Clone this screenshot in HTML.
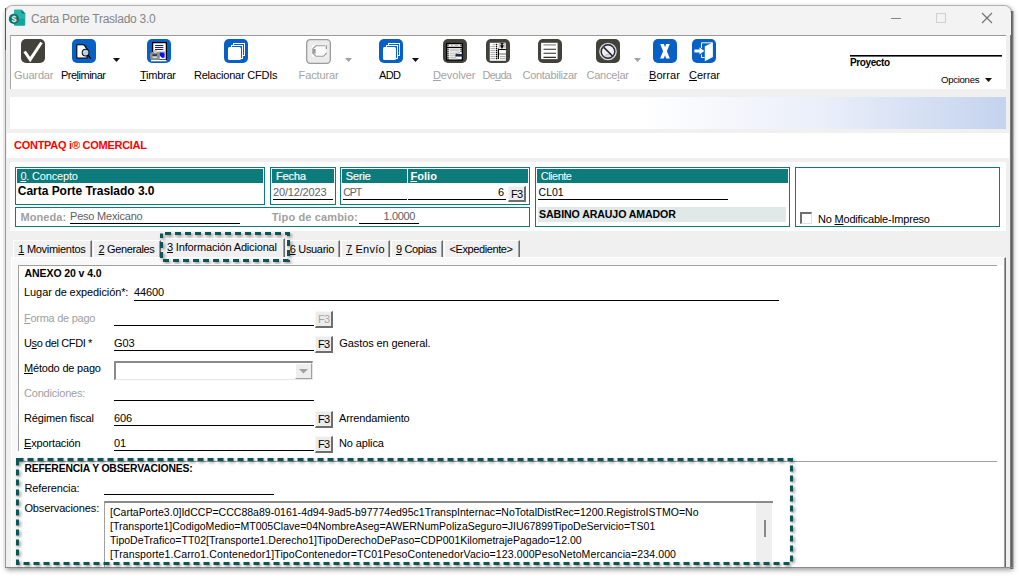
<!DOCTYPE html><html><head><meta charset="utf-8"><style>
*{margin:0;padding:0;box-sizing:border-box}
html,body{width:1020px;height:576px;overflow:hidden;background:#fff;font-family:"Liberation Sans", sans-serif}
.a{position:absolute}
.t{white-space:pre}
u{text-decoration:underline;text-underline-offset:1px}
</style></head><body><div class="a" style="left:5px;top:5px;width:1007px;height:563px;border-radius:8px 8px 0 0;box-shadow:1px 2px 5px rgba(0,0,0,.4);background:#f0f0f0;border:1px solid #b0b0b0;border-left:1px solid #9a9a9a"></div>
<div class="a" style="left:5px;top:8px;width:1px;height:42px;background:#555"></div>
<div class="a" style="left:1010px;top:11px;width:4px;height:558px;background:linear-gradient(to right,#8c8c8c,#5e5e5e 35%,#7a7a7a 65%,#d0d0d0)"></div>
<div class="a" style="left:5px;top:567px;width:1008px;height:1px;background:#8a8a8a"></div>
<div class="a" style="left:6px;top:6px;width:1005px;height:29px;background:#f3f3f3;border-radius:7px 7px 0 0"></div>
<svg class="a" style="left:6px;top:6px" width="24" height="24" viewBox="0 0 24 24">
<path d="M9 3.8 H15.5 L19.2 7.5 V18.8 Q19.2 19.8 18.2 19.8 H9 Q8 19.8 8 18.8 V4.8 Q8 3.8 9 3.8 Z" fill="#14a49b"/>
<path d="M8 3.8 H15.5 L19.2 7.5 V12.5 H8 Z" fill="#2bb3a9"/>
<path d="M15.5 3.8 L19.2 7.5 H15.5 Z" fill="#0d7a73"/>
<circle cx="7.9" cy="12.9" r="5.1" fill="#0b736e"/>
<text x="7.9" y="16.2" font-size="9" font-weight="bold" fill="#e8f4f3" text-anchor="middle" font-family="Liberation Sans">$</text>
</svg>
<div class="a t" style="left:31px;top:12.84px;font-size:12px;line-height:12px;color:#858585;font-weight:normal;;letter-spacing:-0.262px">Carta Porte Traslado 3.0</div>
<div class="a" style="left:891px;top:18px;width:10px;height:1px;background:#888"></div>
<div class="a" style="left:936px;top:13px;width:10px;height:10px;border:1px solid #cfcfcf"></div>
<svg class="a" style="left:981px;top:12px" width="12" height="12" viewBox="0 0 12 12"><path d="M1 1 L11 11 M11 1 L1 11" stroke="#707070" stroke-width="1.1"/></svg>
<div class="a" style="left:10px;top:35px;width:996px;height:54px;background:#fff;border-top:1px solid #9a9a9a;border-left:1px solid #a8a8a8"></div>
<svg class="a" style="left:21px;top:39px" width="24" height="24" viewBox="0 0 24 24"><rect x="0" y="0" width="24" height="24" rx="5" fill="#42423a"/><path d="M3.6 12.5 L9.2 20.5 L20.5 3.5" fill="none" stroke="#fff" stroke-width="3" stroke-linejoin="miter"/></svg>
<svg class="a" style="left:72px;top:39px" width="24" height="24" viewBox="0 0 24 24"><rect x="0" y="0" width="24" height="24" rx="5" fill="#0760c6"/><path d="M4.8 5.8 H11.8 L13 7.2 H13.8 V8.8 L15 9.6 V19 H4.8 Z" fill="#fff" stroke="#000" stroke-width="1.1"/><circle cx="13.6" cy="13.6" r="3.4" fill="#b8d2f0" stroke="#111" stroke-width="1.1"/><path d="M16 16.3 L19 19.8" stroke="#000" stroke-width="1.4"/></svg>
<svg class="a" style="left:147px;top:39px" width="24" height="24" viewBox="0 0 24 24"><rect x="0" y="0" width="24" height="24" rx="5" fill="#0760c6"/><rect x="5.6" y="3.6" width="13.8" height="17.4" fill="#fff" stroke="#000" stroke-width="1.3"/><path d="M8 6.5 H16.3 M8 8.5 H16.3 M8 10.5 H16.3" stroke="#1414f0" stroke-width="1"/><rect x="11" y="12.5" width="7.5" height="2" fill="#9aa0b0"/><path d="M11.5 15.5 L13.5 13.5 L16.5 13.8 L17.8 15 L17.5 18.5 L15.5 19 L13 17 Z" fill="#0a14e6"/><path d="M3 16 Q3 12.5 8 12.5 Q13 12.5 13 16.5 L12.5 21.5 H4 Q3 20 3 16 Z" fill="#8e8e8e"/><rect x="7" y="11" width="3" height="3" fill="#c8c8c8"/><rect x="5.5" y="15.5" width="4.5" height="1.2" fill="#111"/><rect x="5.5" y="17.5" width="4.5" height="1.5" fill="#d8d8d8"/><rect x="4" y="21" width="15.5" height="1.3" fill="#fff"/></svg>
<svg class="a" style="left:224px;top:39px" width="24" height="24" viewBox="0 0 24 24"><rect x="0" y="0" width="24" height="24" rx="5" fill="#0760c6"/><rect x="9.5" y="4.5" width="11" height="12" fill="none" stroke="#fff" stroke-width="1"/><rect x="7.5" y="6.5" width="11" height="13" fill="#0760c6" stroke="#fff" stroke-width="1"/><rect x="4" y="8" width="13" height="13" rx="1.5" fill="#fff"/></svg>
<svg class="a" style="left:306px;top:39px" width="25" height="25" viewBox="0 0 25 25"><rect x="0.65" y="0.65" width="23.7" height="23.7" rx="3.5" fill="#ebebeb" stroke="#9c9c9c" stroke-width="1.3"/><rect x="5.8" y="5.8" width="14.3" height="12" fill="#fbfbfb"/><path d="M20.3 6.3 V10" stroke="#8c8c8c" stroke-width="1.2"/><path d="M19 6.8 H10 L7 9.5 V14.5 L10 17.3 H17.5 L20.6 14" fill="none" stroke="#9a9a9a" stroke-width="1.1"/><rect x="6.5" y="10" width="3.2" height="4.5" fill="#9c9c9c"/><rect x="7.2" y="14.8" width="2.5" height="1" fill="#bbb"/></svg>
<svg class="a" style="left:379px;top:39px" width="24" height="24" viewBox="0 0 24 24"><rect x="0" y="0" width="24" height="24" rx="5" fill="#0760c6"/><rect x="9.5" y="4.5" width="11" height="12" fill="none" stroke="#fff" stroke-width="1"/><rect x="7.5" y="6.5" width="11" height="13" fill="#0760c6" stroke="#fff" stroke-width="1"/><rect x="4" y="8" width="13" height="13" rx="1.5" fill="#fff"/></svg>
<svg class="a" style="left:443px;top:39px" width="24" height="24" viewBox="0 0 24 24"><rect x="0" y="0" width="24" height="24" rx="5" fill="#42423a"/><rect x="3.6" y="4.6" width="15.8" height="16.4" fill="#fff" stroke="#000" stroke-width="1.3"/><path d="M3.6 8.4 H19.4" stroke="#000" stroke-width="1.3"/><circle cx="5" cy="6.3" r="0.75" fill="#000"/><circle cx="18" cy="6.3" r="0.75" fill="#000"/><circle cx="5" cy="10.2" r="0.75" fill="#000"/><circle cx="18" cy="10.2" r="0.75" fill="#000"/><circle cx="5" cy="12.2" r="0.75" fill="#000"/><circle cx="18" cy="12.2" r="0.75" fill="#000"/><circle cx="5" cy="14.2" r="0.75" fill="#000"/><circle cx="5" cy="16.2" r="0.75" fill="#000"/><circle cx="5" cy="18.2" r="0.75" fill="#000"/><circle cx="5" cy="20" r="0.75" fill="#000"/><path d="M8 6.3 H10 M11.5 6.3 H15.5" stroke="#999" stroke-width="0.8"/><rect x="6.5" y="9.5" width="10" height="3" fill="#cdcdcd"/><path d="M6.5 14.2 H14 M6.5 16.2 H13 M6.5 18.2 H13 M6.5 20 H15" stroke="#a8a8a8" stroke-width="0.9"/><path d="M12.5 15 H20.5 V17.6 H12.5 Z" fill="#22264e"/><path d="M13 14.8 L15 13.8 H17" stroke="#555" stroke-width="0.6" fill="none"/></svg>
<svg class="a" style="left:486px;top:39px" width="24" height="24" viewBox="0 0 24 24"><rect x="0" y="0" width="24" height="24" rx="5" fill="#42423a"/><rect x="3.8" y="3.8" width="16.1" height="18" fill="#fff"/><rect x="12.5" y="3.8" width="7.4" height="5" fill="#c4c4c4"/><path d="M12.4 9.5 V20" stroke="#000" stroke-width="1.2"/><path d="M12.4 10.5 H19.9" stroke="#000" stroke-width="1.1"/><path d="M16 4 V9.5" stroke="#000" stroke-width="1.3"/><path d="M13.8 6.5 H18.2 L16 9 Z" fill="#000"/><path d="M14.5 4.3 H17.5" stroke="#000" stroke-width="0.8"/><path d="M13 15 H19.9" stroke="#666" stroke-width="1"/><path d="M6.5 5.6 H9 M4.5 7.6 H9 M4.5 9.6 H9 M4.5 11.6 H9 M4.5 13.6 H9 M4.5 15.6 H9 M4.5 17.6 H9 M4.5 19.6 H9 M14 17.6 H19.5 M14 19.6 H19.5" stroke="#a0a0a0" stroke-width="0.9"/><circle cx="10.5" cy="5.6" r="0.8" fill="#000"/><circle cx="10.5" cy="7.6" r="0.8" fill="#000"/><circle cx="10.5" cy="9.6" r="0.8" fill="#000"/><circle cx="10.5" cy="11.6" r="0.8" fill="#000"/><circle cx="10.5" cy="13.6" r="0.8" fill="#000"/><circle cx="10.5" cy="15.6" r="0.8" fill="#000"/><circle cx="10.5" cy="17.6" r="0.8" fill="#000"/><circle cx="10.5" cy="19.6" r="0.8" fill="#000"/></svg>
<svg class="a" style="left:538px;top:39px" width="24" height="24" viewBox="0 0 24 24"><rect x="0" y="0" width="24" height="24" rx="5" fill="#42423a"/><rect x="3.1" y="3.8" width="16.5" height="16.3" fill="#fff"/><path d="M5.5 5.9 H18" stroke="#a0a0a0" stroke-width="1.5"/><path d="M5.5 10.2 H18 M5.5 14.3 H18 M5.5 18.4 H18" stroke="#2a2a2a" stroke-width="1.1"/></svg>
<svg class="a" style="left:596px;top:39px" width="24" height="24" viewBox="0 0 24 24"><rect x="0" y="0" width="24" height="24" rx="5" fill="#42423a"/><circle cx="12" cy="12.5" r="8.2" fill="none" stroke="#dcdcdc" stroke-width="1.3"/><circle cx="12" cy="12.5" r="6.6" fill="#f2f2f2" stroke="#23264a" stroke-width="1.1"/><path d="M9.5 15.5 H13.5 M8.5 17 H15" stroke="#c0c0c0" stroke-width="1.2"/><path d="M7.8 8.3 L16.5 17" stroke="#2a2a2a" stroke-width="1.7"/></svg>
<svg class="a" style="left:653px;top:39px" width="24" height="24" viewBox="0 0 24 24"><rect x="0" y="0" width="24" height="24" rx="5" fill="#0760c6"/><path d="M7.2 5 H10.9 L12 8.3 L13.1 5 H16.8 L13.9 12.3 L16.9 19.6 H13.2 L12 16.2 L10.8 19.6 H7.1 L10.1 12.3 Z" fill="#fff"/></svg>
<svg class="a" style="left:692px;top:39px" width="24" height="24" viewBox="0 0 24 24"><rect x="0" y="0" width="24" height="24" rx="5" fill="#0760c6"/><path d="M9.5 9 V3.8 H20.5 M9.5 15.5 V18.5 H12.5" fill="none" stroke="#fff" stroke-width="1"/><path d="M12.8 7.2 L20.9 3.6 V18 L12.8 22.3 Z" fill="#fff"/><path d="M2.4 10.5 H7.5 V8.3 L12.3 12 L7.5 15.4 V13.5 H2.4 Z" fill="#fff"/></svg>
<svg class="a" style="left:113px;top:58px" width="7" height="5" viewBox="0 0 7 5"><path d="M0 0 H7 L3.5 4 Z" fill="#111"/></svg>
<svg class="a" style="left:345px;top:58px" width="7" height="5" viewBox="0 0 7 5"><path d="M0 0 H7 L3.5 4 Z" fill="#a0a0a0"/></svg>
<svg class="a" style="left:412px;top:58px" width="7" height="5" viewBox="0 0 7 5"><path d="M0 0 H7 L3.5 4 Z" fill="#111"/></svg>
<svg class="a" style="left:634px;top:58px" width="7" height="5" viewBox="0 0 7 5"><path d="M0 0 H7 L3.5 4 Z" fill="#a0a0a0"/></svg>
<div class="a t" style="left:14px;top:69.69px;font-size:11px;line-height:11px;color:#a3a3a3;font-weight:normal;;letter-spacing:-0.143px">Guardar</div>
<div class="a t" style="left:61px;top:69.69px;font-size:11px;line-height:11px;color:#000;font-weight:normal;;letter-spacing:-0.503px">Pre<u>l</u>iminar</div>
<div class="a t" style="left:140px;top:69.69px;font-size:11px;line-height:11px;color:#000;font-weight:normal;;letter-spacing:-0.247px"><u>T</u>imbrar</div>
<div class="a t" style="left:194px;top:69.69px;font-size:11px;line-height:11px;color:#000;font-weight:normal;;letter-spacing:-0.221px">Relacionar CFDIs</div>
<div class="a t" style="left:298.6px;top:69.69px;font-size:11px;line-height:11px;color:#a3a3a3;font-weight:normal;;letter-spacing:-0.138px">Facturar</div>
<div class="a t" style="left:379px;top:69.69px;font-size:11px;line-height:11px;color:#000;font-weight:normal;;letter-spacing:-0.617px">ADD</div>
<div class="a t" style="left:433px;top:69.69px;font-size:11px;line-height:11px;color:#a3a3a3;font-weight:normal;;letter-spacing:-0.132px"><u>D</u>evolver</div>
<div class="a t" style="left:482.5px;top:69.69px;font-size:11px;line-height:11px;color:#a3a3a3;font-weight:normal;;letter-spacing:-0.734px">De<u>u</u>da</div>
<div class="a t" style="left:522.5px;top:69.69px;font-size:11px;line-height:11px;color:#a3a3a3;font-weight:normal;;letter-spacing:-0.281px">Contabilizar</div>
<div class="a t" style="left:586.5px;top:69.69px;font-size:11px;line-height:11px;color:#a3a3a3;font-weight:normal;;letter-spacing:-0.219px">Cance<u>l</u>ar</div>
<div class="a t" style="left:649px;top:69.69px;font-size:11px;line-height:11px;color:#000;font-weight:normal;;letter-spacing:0.084px"><u>B</u>orrar</div>
<div class="a t" style="left:689px;top:69.69px;font-size:11px;line-height:11px;color:#000;font-weight:normal;;letter-spacing:-0.037px"><u>C</u>errar</div>
<div class="a" style="left:850px;top:55px;width:152px;height:1px;background:#000"></div>
<div class="a" style="left:850px;top:56px;width:152px;height:1px;background:#666"></div>
<div class="a t" style="left:850px;top:57.54px;font-size:10px;line-height:10px;color:#000;font-weight:bold;;letter-spacing:-0.400px">Pro<u>y</u>ecto</div>
<div class="a t" style="left:941px;top:74.87px;font-size:9.6px;line-height:9.6px;color:#000;font-weight:normal;;letter-spacing:-0.290px">Opciones</div>
<svg class="a" style="left:985px;top:77.5px" width="7" height="5" viewBox="0 0 7 5"><path d="M0 0 H7 L3.5 4 Z" fill="#111"/></svg>
<div class="a" style="left:10px;top:97px;width:996px;height:32px;background:linear-gradient(to right,#fff 0%,#fff 63%,#e9eef9 82%,#c4d3ee 100%)"></div>
<div class="a" style="left:7px;top:133px;width:1002px;height:25px;background:#fff"></div>
<div class="a t" style="left:14px;top:139.69px;font-size:11px;line-height:11px;color:#ff0000;font-weight:bold;;letter-spacing:-0.267px">CONTPAQ i® COMERCIAL</div>
<div class="a" style="left:10px;top:162px;width:996px;height:69px;background:#fff"></div>
<div class="a" style="left:15px;top:167px;width:250px;height:38px;border:1px solid #0b7c7b"></div>
<div class="a" style="left:17px;top:169px;width:246px;height:14px;background:#0b7c7b"></div>
<div class="a t" style="left:20.4px;top:170.69px;font-size:11px;line-height:11px;color:#fff;font-weight:normal;;letter-spacing:-0.183px"><u>0</u>. Concepto</div>
<div class="a t" style="left:17.8px;top:184.84px;font-size:12px;line-height:12px;color:#000;font-weight:bold;;letter-spacing:-0.030px">Carta Porte Traslado 3.0</div>
<div class="a" style="left:270px;top:167px;width:66px;height:38px;border:1px solid #0b7c7b"></div>
<div class="a" style="left:272px;top:169px;width:62px;height:14px;background:#0b7c7b"></div>
<div class="a t" style="left:275.8px;top:171.19px;font-size:11px;line-height:11px;color:#f0f0f0;font-weight:normal;text-shadow:0.6px 0 0 rgba(240,240,240,.7);;letter-spacing:-0.145px">Fecha</div>
<div class="a t" style="left:273px;top:186.69px;font-size:11px;line-height:11px;color:#606060;font-weight:normal;;letter-spacing:-0.162px">20/12/2023</div>
<div class="a" style="left:273px;top:199px;width:60px;height:1px;background:#000"></div>
<div class="a" style="left:340px;top:167px;width:190px;height:38px;border:1px solid #0b7c7b"></div>
<div class="a" style="left:342px;top:169px;width:65px;height:14px;background:#0b7c7b"></div>
<div class="a" style="left:408px;top:169px;width:120px;height:14px;background:#0b7c7b"></div>
<div class="a t" style="left:345.6px;top:171.19px;font-size:11px;line-height:11px;color:#f0f0f0;font-weight:normal;text-shadow:0.6px 0 0 rgba(240,240,240,.7);;letter-spacing:-0.172px">Serie</div>
<div class="a t" style="left:410.4px;top:170.69px;font-size:11px;line-height:11px;color:#fff;font-weight:bold;;letter-spacing:0.076px"><u>F</u>olio</div>
<div class="a t" style="left:343.2px;top:187.11px;font-size:10.5px;line-height:10.5px;color:#606060;font-weight:normal;;letter-spacing:-1.000px">CPT</div>
<div class="a" style="left:343px;top:199px;width:64px;height:1px;background:#000"></div>
<div class="a" style="left:408px;top:199px;width:98px;height:1px;background:#000"></div>
<div class="a t" style="left:498px;top:186.69px;font-size:11px;line-height:11px;color:#000;font-weight:normal;">6</div>
<div class="a" style="left:508px;top:186px;width:18px;height:16px;background:#ececec;border-top:1px solid #f6f6f6;border-left:1px solid #f6f6f6;border-right:2px solid #6e6e6e;border-bottom:2px solid #6e6e6e"></div>
<div class="a t" style="left:511px;top:189.49px;font-size:11px;line-height:11px;color:#000;font-weight:normal;;letter-spacing:-0.844px">F3</div>
<div class="a" style="left:15px;top:207px;width:515px;height:20px;border:1px solid #0b7c7b"></div>
<div class="a t" style="left:20.4px;top:211.69px;font-size:11px;line-height:11px;color:#a0a0a0;font-weight:bold;;letter-spacing:0.094px">Moneda:</div>
<div class="a t" style="left:70px;top:210.69px;font-size:11px;line-height:11px;color:#606060;font-weight:normal;;letter-spacing:-0.210px">Peso Mexicano</div>
<div class="a" style="left:70px;top:223px;width:170px;height:1px;background:#000"></div>
<div class="a t" style="left:271.7px;top:211.69px;font-size:11px;line-height:11px;color:#a0a0a0;font-weight:bold;;letter-spacing:0.133px">Tipo de cambio:</div>
<div class="a t" style="left:383.5px;top:210.69px;font-size:11px;line-height:11px;color:#606060;font-weight:normal;;letter-spacing:-0.331px">1.0000</div>
<div class="a" style="left:359px;top:223px;width:60px;height:1px;background:#000"></div>
<div class="a" style="left:535px;top:167px;width:255px;height:60px;border:1px solid #0b7c7b"></div>
<div class="a" style="left:537px;top:169px;width:251px;height:14px;background:#0b7c7b"></div>
<div class="a t" style="left:540.7px;top:170.69px;font-size:11px;line-height:11px;color:#fff;font-weight:normal;;letter-spacing:-0.492px">Cliente</div>
<div class="a t" style="left:538.6px;top:187.11px;font-size:10.5px;line-height:10.5px;color:#000;font-weight:normal;">CL01</div>
<div class="a" style="left:538px;top:199px;width:190px;height:1px;background:#000"></div>
<div class="a" style="left:538px;top:207px;width:248px;height:15px;background:#e1e8e8"></div>
<div class="a t" style="left:539.1px;top:209.03px;font-size:10.6px;line-height:10.6px;color:#000;font-weight:bold;;letter-spacing:-0.100px">SABINO ARAUJO AMADOR</div>
<div class="a" style="left:795px;top:167px;width:205px;height:60px;border:1px solid #0b7c7b"></div>
<div class="a" style="left:800px;top:212px;width:12px;height:12px;border-top:2px solid #707070;border-left:2px solid #707070;border-right:1px solid #e0e0e0;border-bottom:1px solid #e0e0e0;background:#fff"></div>
<div class="a t" style="left:818px;top:213.69px;font-size:11px;line-height:11px;color:#000;font-weight:normal;;letter-spacing:-0.199px">No <u>M</u>odificable-Impreso</div>
<div class="a" style="left:13px;top:240px;width:79px;height:18px;background:#f0f0f0;border-left:1px solid #fff;border-top:1px solid #fff;border-right:1px solid #6a6a6a;box-shadow:inset -1px 0 0 #a0a0a0"></div>
<div class="a t" style="left:18.3px;top:243.69px;font-size:11px;line-height:11px;color:#000;font-weight:normal;;letter-spacing:-0.285px"><u>1</u> Movimientos</div>
<div class="a" style="left:93px;top:240px;width:68px;height:18px;background:#f0f0f0;border-left:1px solid #fff;border-top:1px solid #fff;border-right:1px solid #6a6a6a;box-shadow:inset -1px 0 0 #a0a0a0"></div>
<div class="a t" style="left:98.6px;top:243.69px;font-size:11px;line-height:11px;color:#000;font-weight:normal;;letter-spacing:-0.374px"><u>2</u> Generales</div>
<div class="a" style="left:162px;top:238px;width:123px;height:20px;background:#f0f0f0;border-left:1px solid #fff;border-top:1px solid #fff;border-right:1px solid #6a6a6a;box-shadow:inset -1px 0 0 #a0a0a0"></div>
<div class="a t" style="left:167px;top:241.69px;font-size:11px;line-height:11px;color:#000;font-weight:normal;;letter-spacing:-0.170px"><u>3</u> Información Adicional</div>
<div class="a" style="left:286px;top:240px;width:54px;height:18px;background:#f0f0f0;border-left:1px solid #fff;border-top:1px solid #fff;border-right:1px solid #6a6a6a;box-shadow:inset -1px 0 0 #a0a0a0"></div>
<div class="a t" style="left:289.7px;top:243.69px;font-size:11px;line-height:11px;color:#000;font-weight:normal;;letter-spacing:-0.312px"><u>6</u> Usuario</div>
<div class="a" style="left:341px;top:240px;width:49px;height:18px;background:#f0f0f0;border-left:1px solid #fff;border-top:1px solid #fff;border-right:1px solid #6a6a6a;box-shadow:inset -1px 0 0 #a0a0a0"></div>
<div class="a t" style="left:346px;top:243.69px;font-size:11px;line-height:11px;color:#000;font-weight:normal;;letter-spacing:0.198px"><u>7</u> Envío</div>
<div class="a" style="left:391px;top:240px;width:52px;height:18px;background:#f0f0f0;border-left:1px solid #fff;border-top:1px solid #fff;border-right:1px solid #6a6a6a;box-shadow:inset -1px 0 0 #a0a0a0"></div>
<div class="a t" style="left:396px;top:243.69px;font-size:11px;line-height:11px;color:#000;font-weight:normal;;letter-spacing:-0.375px"><u>9</u> Copias</div>
<div class="a" style="left:444px;top:240px;width:76px;height:18px;background:#f0f0f0;border-left:1px solid #fff;border-top:1px solid #fff;border-right:1px solid #6a6a6a;box-shadow:inset -1px 0 0 #a0a0a0"></div>
<div class="a t" style="left:449.5px;top:243.69px;font-size:11px;line-height:11px;color:#000;font-weight:normal;;letter-spacing:-0.399px">&lt;Expediente&gt;</div>
<div class="a" style="left:11px;top:257px;width:995px;height:310px;background:#f9f9f9;border-top:1px solid #fff;border-left:1px solid #fff;border-right:1px solid #6a6a6a;box-shadow:inset -1px 0 0 #a0a0a0"></div>
<div class="a" style="left:18px;top:265px;width:985px;height:302px;background:#fff"></div>
<div class="a" style="left:18px;top:265px;width:979px;height:1px;background:#a0a0a0"></div>
<div class="a" style="left:18px;top:265px;width:1px;height:186px;background:#a0a0a0"></div>
<div class="a" style="left:18px;top:461px;width:979px;height:1px;background:#a0a0a0"></div>
<div class="a t" style="left:24.6px;top:268.11px;font-size:10.5px;line-height:10.5px;color:#000;font-weight:bold;;letter-spacing:-0.094px">ANEXO 20 v 4.0</div>
<div class="a t" style="left:24.1px;top:287.19px;font-size:11px;line-height:11px;color:#000;font-weight:normal;;letter-spacing:-0.106px">Lugar de expedición*:</div>
<div class="a t" style="left:134px;top:287.19px;font-size:11px;line-height:11px;color:#000;font-weight:normal;letter-spacing:-0.12px">44600</div>
<div class="a" style="left:134px;top:300px;width:645px;height:1px;background:#000"></div>
<div class="a t" style="left:24px;top:312.69px;font-size:11px;line-height:11px;color:#a0a0a0;font-weight:normal;;letter-spacing:-0.269px"><u>F</u>orma de pago</div>
<div class="a" style="left:114px;top:325px;width:200px;height:1px;background:#000"></div>
<div class="a" style="left:315px;top:311px;width:18px;height:17px;background:#ececec;border-top:1px solid #f6f6f6;border-left:1px solid #f6f6f6;border-right:2px solid #6e6e6e;border-bottom:2px solid #6e6e6e"></div>
<div class="a t" style="left:318px;top:314.49px;font-size:11px;line-height:11px;color:#a8a8a8;font-weight:normal;;letter-spacing:-0.844px">F3</div>
<div class="a t" style="left:24px;top:337.69px;font-size:11px;line-height:11px;color:#000;font-weight:normal;;letter-spacing:-0.390px">U<u>s</u>o del CFDI *</div>
<div class="a t" style="left:114px;top:337.69px;font-size:11px;line-height:11px;color:#000;font-weight:normal;letter-spacing:-0.12px">G03</div>
<div class="a" style="left:114px;top:350px;width:200px;height:1px;background:#000"></div>
<div class="a" style="left:315px;top:336px;width:18px;height:17px;background:#ececec;border-top:1px solid #f6f6f6;border-left:1px solid #f6f6f6;border-right:2px solid #6e6e6e;border-bottom:2px solid #6e6e6e"></div>
<div class="a t" style="left:318px;top:339.49px;font-size:11px;line-height:11px;color:#000;font-weight:normal;;letter-spacing:-0.844px">F3</div>
<div class="a t" style="left:339.3px;top:337.69px;font-size:11px;line-height:11px;color:#000;font-weight:normal;;letter-spacing:-0.097px">Gastos en general.</div>
<div class="a t" style="left:24px;top:362.69px;font-size:11px;line-height:11px;color:#000;font-weight:normal;;letter-spacing:-0.195px"><u>M</u>étodo de pago</div>
<div class="a" style="left:114px;top:361px;width:199px;height:19px;background:#fff;border-top:2px solid #8a8a8a;border-left:2px solid #8a8a8a;border-bottom:1px solid #e6e6e6;border-right:1px solid #e6e6e6"></div>
<div class="a" style="left:295px;top:363px;width:17px;height:16px;background:#eeeeee;border-right:1px solid #a0a0a0;border-bottom:1px solid #a0a0a0;border-left:1px solid #fff;border-top:1px solid #fff"></div>
<svg class="a" style="left:299px;top:369px" width="9" height="5" viewBox="0 0 9 5"><path d="M0 0 H9 L4.5 4.5 Z" fill="#a0a0a0"/></svg>
<div class="a t" style="left:24px;top:387.69px;font-size:11px;line-height:11px;color:#a0a0a0;font-weight:normal;;letter-spacing:-0.209px">Condiciones:</div>
<div class="a" style="left:114px;top:400px;width:200px;height:1px;background:#000"></div>
<div class="a t" style="left:24px;top:412.69px;font-size:11px;line-height:11px;color:#000;font-weight:normal;;letter-spacing:-0.165px">Régimen fiscal</div>
<div class="a t" style="left:114px;top:412.69px;font-size:11px;line-height:11px;color:#000;font-weight:normal;letter-spacing:-0.12px">606</div>
<div class="a" style="left:114px;top:425px;width:200px;height:1px;background:#000"></div>
<div class="a" style="left:315px;top:411px;width:18px;height:17px;background:#ececec;border-top:1px solid #f6f6f6;border-left:1px solid #f6f6f6;border-right:2px solid #6e6e6e;border-bottom:2px solid #6e6e6e"></div>
<div class="a t" style="left:318px;top:414.49px;font-size:11px;line-height:11px;color:#000;font-weight:normal;;letter-spacing:-0.844px">F3</div>
<div class="a t" style="left:339px;top:412.69px;font-size:11px;line-height:11px;color:#000;font-weight:normal;letter-spacing:-0.12px">Arrendamiento</div>
<div class="a t" style="left:24px;top:437.69px;font-size:11px;line-height:11px;color:#000;font-weight:normal;;letter-spacing:-0.151px"><u>E</u>xportación</div>
<div class="a t" style="left:114px;top:437.69px;font-size:11px;line-height:11px;color:#000;font-weight:normal;letter-spacing:-0.12px">01</div>
<div class="a" style="left:114px;top:450px;width:200px;height:1px;background:#000"></div>
<div class="a" style="left:315px;top:436px;width:18px;height:17px;background:#ececec;border-top:1px solid #f6f6f6;border-left:1px solid #f6f6f6;border-right:2px solid #6e6e6e;border-bottom:2px solid #6e6e6e"></div>
<div class="a t" style="left:318px;top:439.49px;font-size:11px;line-height:11px;color:#000;font-weight:normal;;letter-spacing:-0.844px">F3</div>
<div class="a t" style="left:339px;top:437.69px;font-size:11px;line-height:11px;color:#000;font-weight:normal;letter-spacing:-0.12px">No aplica</div>
<div class="a t" style="left:24.4px;top:463.50px;font-size:10.4px;line-height:10.4px;color:#000;font-weight:bold;;letter-spacing:-0.189px">REFERENCIA Y OBSERVACIONES:</div>
<div class="a t" style="left:24.4px;top:483.09px;font-size:11px;line-height:11px;color:#000;font-weight:normal;letter-spacing:-0.12px">Referencia:</div>
<div class="a" style="left:104px;top:494px;width:170px;height:1px;background:#000"></div>
<div class="a t" style="left:24.4px;top:502.69px;font-size:11px;line-height:11px;color:#000;font-weight:normal;letter-spacing:-0.12px">Observaciones:</div>
<div class="a" style="left:104px;top:501px;width:669px;height:66px;background:#fff;border-top:2px solid #8a8a8a;border-left:1px solid #a0a0a0"></div>
<div class="a" style="left:756px;top:503px;width:16px;height:64px;background:#efefef"></div>
<div class="a" style="left:764px;top:520px;width:2px;height:17px;background:#8a8a8a"></div>
<div class="a t" style="left:110px;top:506.68px;font-size:10.54px;line-height:10.54px;color:#000;font-weight:normal;">[CartaPorte3.0]IdCCP=CCC88a89-0161-4d94-9ad5-b97774ed95c1TranspInternac=NoTotalDistRec=1200.RegistroISTMO=No</div>
<div class="a t" style="left:110px;top:520.78px;font-size:10.54px;line-height:10.54px;color:#000;font-weight:normal;">[Transporte1]CodigoMedio=MT005Clave=04NombreAseg=AWERNumPolizaSeguro=JIU67899TipoDeServicio=TS01</div>
<div class="a t" style="left:110px;top:534.88px;font-size:10.54px;line-height:10.54px;color:#000;font-weight:normal;">TipoDeTrafico=TT02[Transporte1.Derecho1]TipoDerechoDePaso=CDP001KilometrajePagado=12.00</div>
<div class="a t" style="left:110px;top:548.98px;font-size:10.54px;line-height:10.54px;color:#000;font-weight:normal;;letter-spacing:0.097px">[Transporte1.Carro1.Contenedor1]TipoContenedor=TC01PesoContenedorVacio=123.000PesoNetoMercancia=234.000</div>
<svg class="a" style="left:157px;top:229px;overflow:visible" width="138" height="38"><defs><filter id="sh160" x="-5%" y="-5%" width="110%" height="110%"><feGaussianBlur stdDeviation="1.5"/></filter></defs><rect x="4.5" y="4.5" width="127" height="27" fill="none" stroke="rgba(0,0,0,.45)" stroke-width="3" stroke-dasharray="6 4" stroke-dashoffset="6.5" filter="url(#sh160)" transform="translate(1.5 1.5)"/><rect x="4.5" y="4.5" width="127" height="27" fill="none" stroke="#0d5454" stroke-width="3" stroke-dasharray="6 4" stroke-dashoffset="6.5"/></svg>
<svg class="a" style="left:13px;top:455px;overflow:visible" width="785" height="115"><defs><filter id="sh16" x="-5%" y="-5%" width="110%" height="110%"><feGaussianBlur stdDeviation="1.5"/></filter></defs><rect x="4.5" y="4.5" width="774" height="104" fill="none" stroke="rgba(0,0,0,.45)" stroke-width="3" stroke-dasharray="6 4" stroke-dashoffset="0" filter="url(#sh16)" transform="translate(1.5 1.5)"/><rect x="4.5" y="4.5" width="774" height="104" fill="none" stroke="#0d5454" stroke-width="3" stroke-dasharray="6 4" stroke-dashoffset="0"/></svg></body></html>
